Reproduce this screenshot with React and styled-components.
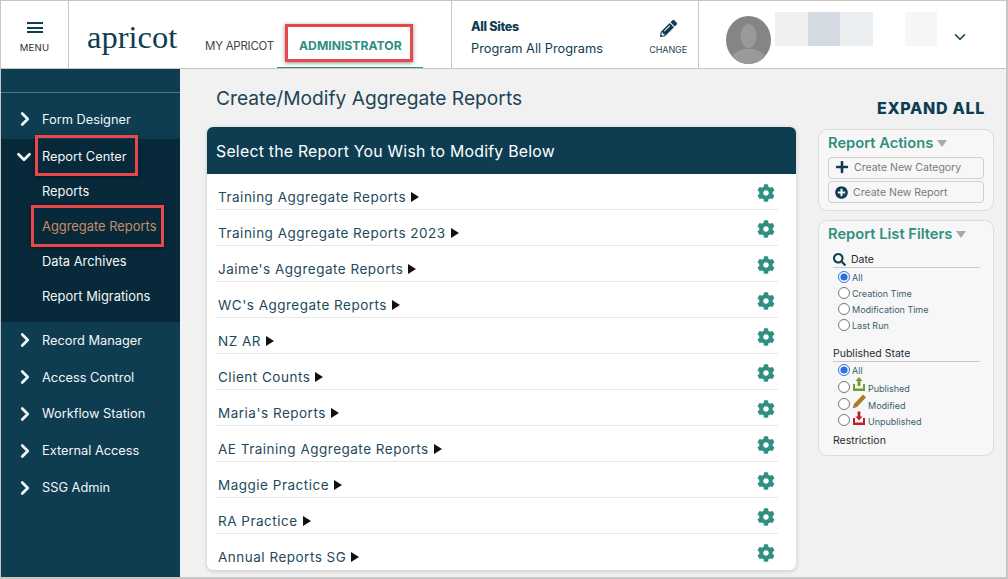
import styled, { createGlobalStyle } from 'styled-components'
import { ChevronDown, ChevronRight } from 'lucide-react'
import { FaCog, FaPencilAlt, FaPlus, FaPlusCircle, FaSearch } from 'react-icons/fa'

const navy = '#0e3d52'
const teal = '#2f8f80'

const GlobalStyle = createGlobalStyle`
  * { box-sizing: border-box; }
  html, body { margin: 0; padding: 0; }
  body { font-family: Inter, "Liberation Sans", sans-serif; color: ${navy}; overflow: hidden; }
`

const Page = styled.div`
  width: 1008px;
  height: 579px;
  display: flex;
  flex-direction: column;
  overflow: hidden;
  background: #f1f1f1;
  border: 1px solid #c6c6c6;
  border-bottom-width: 2px;
  border-right-width: 2px;
`

const Header = styled.header`
  height: 68px;
  flex: none;
  display: flex;
  background: #fff;
  border-bottom: 1px solid #c6c6c6;
`

const MenuButton = styled.div`
  width: 68px;
  border-right: 1px solid #c6c6c6;
  display: flex;
  flex-direction: column;
  align-items: center;
  padding-top: 21px;
  gap: 9px;
  font-size: 9.5px;
  letter-spacing: 0.2px;
  color: #1d2b33;
`

const Burger = styled.span`
  width: 16px;
  height: 11px;
  border-top: 2px solid ${navy};
  border-bottom: 2px solid ${navy};
  position: relative;
  &::after {
    content: '';
    position: absolute;
    left: 0;
    right: 0;
    top: 2.5px;
    height: 2px;
    background: ${navy};
  }
`

const Logo = styled.div`
  width: 136px;
  padding: 17px 0 0 18px;
  font-family: "Liberation Serif", serif;
  font-size: 32.5px;
  line-height: 38px;
  color: ${navy};
`

const Tabs = styled.nav`
  width: 247px;
  display: flex;
  align-items: flex-start;
  border-right: 1px solid #c6c6c6;
`

const Tab = styled.div`
  height: 67px;
  padding-top: 38px;
  font-size: 11.5px;
  line-height: 14px;
  white-space: nowrap;
  ${({ $active }) =>
    $active
      ? `
    width: 146px;
    margin-left: 3px;
    padding-left: 22px;
    font-size: 12.2px;
    color: ${teal};
    font-weight: 700;
    border-bottom: 1px solid ${teal};
  `
      : `
    color: #444;
    letter-spacing: -0.25px;
    padding-left: 0;
  `}
`

const Marked = styled.span`
  position: relative;
  &::after {
    content: '';
    position: absolute;
    border: 3px solid #e8474c;
    box-shadow: 0 1px 4px rgba(0, 0, 0, 0.45);
    pointer-events: none;
    top: ${({ $t }) => $t}px;
    bottom: ${({ $b }) => $b}px;
    left: ${({ $l }) => $l}px;
    right: ${({ $r }) => $r}px;
  }
`

const SiteBlock = styled.div`
  width: 247px;
  display: flex;
  justify-content: space-between;
  padding: 17px 11px 0 19px;
  border-right: 1px solid #c6c6c6;
`

const SiteText = styled.div`
  font-size: 12.8px;
  line-height: 22px;
  white-space: nowrap;
  b { display: block; font-size: 12.5px; font-weight: 800; letter-spacing: -0.3px; line-height: 18px; margin-bottom: 2px; }
`

const ChangeButton = styled.div`
  display: flex;
  flex-direction: column;
  align-items: center;
  gap: 7px;
  padding-top: 2px;
  font-size: 9px;
  letter-spacing: -0.1px;
  color: #29414e;
`

const UserBlock = styled.div`
  flex: 1;
  display: flex;
  align-items: flex-start;
  padding: 15px 0 0 27px;
  svg.caret { margin: 12px 0 0 14px; }
`

const Avatar = styled.svg`
  width: 45px;
  height: 48px;
  flex: none;
`

const BlurStrip = styled.div`
  display: flex;
  margin: -4px 0 0 ${({ $gap }) => $gap}px;
`

const BlurCell = styled.span`
  display: block;
  width: 32.5px;
  height: 34px;
  background: ${({ $c }) => $c};
`

const Body = styled.div`
  flex: 1;
  min-height: 0;
  display: flex;
`

const Sidebar = styled.aside`
  width: 179px;
  flex: none;
  background: ${navy};
  padding-top: 23px;
  color: #fff;
`

const SideRule = styled.div`
  height: 1px;
  background: #557482;
  margin-bottom: 12px;
`

const NavItem = styled.div`
  height: ${({ $h }) => $h || 36.8}px;
  display: flex;
  align-items: center;
  padding-left: 12px;
  gap: 7px;
  font-size: 12.8px;
  white-space: nowrap;
  color: #f2f6f7;
`

const NavChevron = styled(ChevronRight)`
  transform: translateX(1px);
`

const NavGroup = styled.div`
  background: #07293a;
  height: 183px;
  margin-top: 6px;
`

const SubItem = styled.div`
  height: 35px;
  display: flex;
  align-items: center;
  padding-left: 41px;
  font-size: 12.9px;
  white-space: nowrap;
  color: ${({ $active }) => ($active ? '#c98c69' : '#f2f6f7')};
`

const Main = styled.main`
  flex: 1;
  display: flex;
  min-width: 0;
`

const Center = styled.section`
  width: 638px;
  padding-left: 27px;
  flex: none;
`

const Title = styled.h1`
  margin: 0;
  padding: 17px 0 0 9px;
  height: 58px;
  font-size: 19.2px;
  line-height: 25px;
  font-weight: 400;
  color: #1d4557;
`

const Card = styled.div`
  width: 589px;
  background: #fff;
  border-radius: 6px;
  box-shadow: 0 1px 4px rgba(0, 0, 0, 0.18);
  overflow: hidden;
`

const CardHead = styled.div`
  height: 47px;
  background: ${navy};
  color: #fff;
  display: flex;
  align-items: center;
  padding: 2px 0 0 9px;
  font-size: 15.8px;
  letter-spacing: 0.25px;
`

const Rows = styled.div`
  padding: 0 18px 0 9px;
`

const Row = styled.div`
  height: 36px;
  padding: 14px 3px 0 2px;
  display: flex;
  align-items: flex-start;
  justify-content: space-between;
  border-bottom: 1px solid ${({ $last }) => ($last ? 'transparent' : '#e6e8e9')};
  font-size: 13.5px;
  line-height: 18px;
  letter-spacing: 0.5px;
  color: #1f4a5c;
  svg { margin-top: -4px; color: ${teal}; }
`

const RowLabel = styled.span`
  display: inline-flex;
  align-items: center;
  gap: 5px;
`

const Caret = styled.i`
  display: inline-block;
  border-style: solid;
  border-width: 5px 0 5px 8px;
  border-color: transparent transparent transparent #111;
`

const Side = styled.aside`
  width: 176px;
  flex: none;
  display: flex;
  flex-direction: column;
  gap: 9px;
`

const ExpandAll = styled.div`
  height: 51px;
  padding: 29px 9px 0 0;
  text-align: right;
  font-size: 16px;
  line-height: 20px;
  font-weight: 800;
  letter-spacing: 0.7px;
  color: ${navy};
  white-space: nowrap;
`

const Panel = styled.div`
  background: #f7f7f7;
  border: 1px solid #dcdcdc;
  border-radius: 9px;
  padding: 4px 9px 0;
  height: ${({ $h }) => $h}px;
`

const PanelTitle = styled.div`
  display: flex;
  align-items: center;
  gap: 4px;
  font-size: 14.7px;
  line-height: 18px;
  font-weight: 600;
  color: ${teal};
  white-space: nowrap;
  &::after {
    content: '';
    margin-top: 1px;
    border-style: solid;
    border-width: 7px 5px 0 5px;
    border-color: #a9a9a9 transparent transparent transparent;
  }
`

const ActionButton = styled.div`
  width: 156px;
  height: 22px;
  margin-top: ${({ $mt }) => $mt}px;
  border: 1px solid #cfcfcf;
  border-radius: 4px;
  display: flex;
  align-items: center;
  gap: 5px;
  padding: 0 0 ${({ $pb }) => $pb || 0}px 6px;
  font-size: 10.5px;
  color: #7a7a7a;
  white-space: nowrap;
  svg { color: ${navy}; flex: none; }
`

const FilterHead = styled.div`
  margin: ${({ $mt }) => $mt}px 4px 0 5px;
  height: 17px;
  display: flex;
  align-items: center;
  gap: 5px;
  font-size: 10.5px;
  color: #1d2b33;
  border-bottom: 1px solid #c9c9c9;
  svg { color: ${navy}; }
`

const FilterList = styled.div`
  padding: ${({ $pt }) => $pt || 0}px 0 0 10px;
`

const Option = styled.label`
  height: ${({ $h }) => $h || 16}px;
  display: flex;
  align-items: center;
  gap: 2px;
  font-size: 9px;
  color: #3a5f6f;
  white-space: nowrap;
  input {
    width: 12px;
    height: 12px;
    margin: 0;
    flex: none;
    accent-color: #2f6fe0;
  }
`

const StateLabel = styled.span`
  margin-top: 3px;
`

const StateIcon = styled.svg`
  width: 14px;
  height: 15px;
  margin-top: -4px;
  flex: none;
`

const RestrictionLabel = styled.div`
  margin: 6px 0 0 5px;
  font-size: 10.5px;
  color: #1d2b33;
`

const reports = [
  'Training Aggregate Reports',
  'Training Aggregate Reports 2023',
  "Jaime's Aggregate Reports",
  "WC's Aggregate Reports",
  'NZ AR',
  'Client Counts',
  "Maria's Reports",
  'AE Training Aggregate Reports',
  'Maggie Practice',
  'RA Practice',
  'Annual Reports SG',
]

const closedNav = ['Record Manager', 'Access Control', 'Workflow Station', 'External Access', 'SSG Admin']
const dateOptions = ['All', 'Creation Time', 'Modification Time', 'Last Run']

const PublishedIcon = () => (
  <StateIcon viewBox="0 0 14 15">
    <path d="M7 0l3.500 4H8.400v5H5.600V4H3.500z" fill="#6f9e32" />
    <path d="M1 7v7h12V7h-2v4.500H3V7z" fill="#6f9e32" />
  </StateIcon>
)

const ModifiedIcon = () => (
  <StateIcon viewBox="0 0 14 15">
    <path d="M11 0.500l3 3L5 13l-4.500 1.500L2 10z" fill="#a67c2d" />
  </StateIcon>
)

const UnpublishedIcon = () => (
  <StateIcon viewBox="0 0 14 15">
    <path d="M7 9.500L3.500 5.500h2.100V0.500h2.800v5h2.100z" fill="#c01f26" />
    <path d="M1 7v7h12V7h-2v4.500H3V7z" fill="#c01f26" />
  </StateIcon>
)

export default function App() {
  return (
    <Page>
      <GlobalStyle />
      <Header>
        <MenuButton>
          <Burger />
          MENU
        </MenuButton>
        <Logo>apricot</Logo>
        <Tabs>
          <Tab>MY APRICOT</Tab>
          <Tab $active>
            <Marked $t={-14} $b={-9} $l={-14} $r={-11}>
              ADMINISTRATOR
            </Marked>
          </Tab>
        </Tabs>
        <SiteBlock>
          <SiteText>
            <b>All Sites</b>
            Program All Programs
          </SiteText>
          <ChangeButton>
            <FaPencilAlt size={17} color={navy} />
            CHANGE
          </ChangeButton>
        </SiteBlock>
        <UserBlock>
          <Avatar viewBox="0 0 45 48">
            <defs>
              <clipPath id="face">
                <ellipse cx="22.500" cy="24" rx="22.500" ry="24" />
              </clipPath>
            </defs>
            <g clipPath="url(#face)">
              <rect width="45" height="48" fill="#858585" />
              <ellipse cx="22.500" cy="20" rx="8" ry="12" fill="#9a9a9a" />
              <path d="M4 48c0-10 8-13 14-15h9c6 2 14 5 14 15z" fill="#9a9a9a" />
            </g>
          </Avatar>
          <BlurStrip $gap={4}>
            <BlurCell $c="#f0f0f0" />
            <BlurCell $c="#d3dae1" />
            <BlurCell $c="#eceff1" />
          </BlurStrip>
          <BlurStrip $gap={32}>
            <BlurCell $c="#f5f6f7" />
          </BlurStrip>
          <ChevronDown className="caret" size={18} strokeWidth={2} color={navy} />
        </UserBlock>
      </Header>
      <Body>
        <Sidebar>
          <SideRule />
          <NavItem $h={28}>
            <NavChevron size={22} strokeWidth={3} />
            Form Designer
          </NavItem>
          <NavGroup>
            <NavItem $h={35}>
              <ChevronDown size={22} strokeWidth={3} />
              <Marked $t={-14} $b={-12} $l={-7} $r={-11}>
                Report Center
              </Marked>
            </NavItem>
            <SubItem>Reports</SubItem>
            <SubItem $active>
              <Marked $t={-14} $b={-13} $l={-11} $r={-8}>
                Aggregate Reports
              </Marked>
            </SubItem>
            <SubItem>Data Archives</SubItem>
            <SubItem>Report Migrations</SubItem>
          </NavGroup>
          {closedNav.map((name) => (
            <NavItem key={name}>
              <NavChevron size={22} strokeWidth={3} />
              {name}
            </NavItem>
          ))}
        </Sidebar>
        <Main>
          <Center>
            <Title>Create/Modify Aggregate Reports</Title>
            <Card>
              <CardHead>Select the Report You Wish to Modify Below</CardHead>
              <Rows>
                {reports.map((name, i) => (
                  <Row key={name} $last={i === reports.length - 1}>
                    <RowLabel>
                      {name}
                      <Caret />
                    </RowLabel>
                    <FaCog size={18} />
                  </Row>
                ))}
              </Rows>
            </Card>
          </Center>
          <Side>
            <ExpandAll>EXPAND ALL</ExpandAll>
            <Panel $h={82}>
              <PanelTitle>Report Actions</PanelTitle>
              <ActionButton $mt={5} $pb={2}>
                <FaPlus size={14} />
                Create New Category
              </ActionButton>
              <ActionButton $mt={2}>
                <FaPlusCircle size={13} />
                Create New Report
              </ActionButton>
            </Panel>
            <Panel $h={236}>
              <PanelTitle>Report List Filters</PanelTitle>
              <FilterHead $mt={8}>
                <FaSearch size={13} />
                Date
              </FilterHead>
              <FilterList $pt={1}>
                {dateOptions.map((name, i) => (
                  <Option key={name}>
                    <input type="radio" name="date" defaultChecked={i === 0} />
                    {name}
                  </Option>
                ))}
              </FilterList>
              <FilterHead $mt={12}>Published State</FilterHead>
              <FilterList>
                <Option>
                  <input type="radio" name="state" defaultChecked />
                  All
                </Option>
                <Option $h={17}>
                  <input type="radio" name="state" />
                  <PublishedIcon />
                  <StateLabel>Published</StateLabel>
                </Option>
                <Option $h={17}>
                  <input type="radio" name="state" />
                  <ModifiedIcon />
                  <StateLabel>Modified</StateLabel>
                </Option>
                <Option>
                  <input type="radio" name="state" />
                  <UnpublishedIcon />
                  <StateLabel>Unpublished</StateLabel>
                </Option>
              </FilterList>
              <RestrictionLabel>Restriction</RestrictionLabel>
            </Panel>
          </Side>
        </Main>
      </Body>
    </Page>
  )
}
